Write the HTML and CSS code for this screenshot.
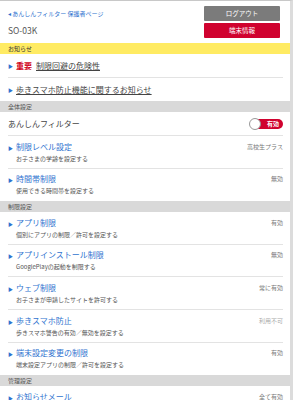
FILE: index.html
```html
<!DOCTYPE html>
<html lang="ja">
<head>
<meta charset="utf-8">
<link rel="stylesheet" href="styles.css">
</head>
<body>
<div class="page">
  <header class="top">
    <div class="top-left">
      <a class="back">◂ あんしんフィルター 保護者ページ</a>
      <div class="model">SO-03K</div>
    </div>
    <div class="top-right">
      <button class="btn btn-gray">ログアウト</button>
      <button class="btn btn-red">端末情報</button>
    </div>
  </header>

  <div class="notice-head">お知らせ</div>
  <div class="notice">
    <span class="tri">▶</span><span class="imp">重要</span><a class="ul">制限回避の危険性</a>
  </div>
  <div class="notice last">
    <span class="tri">▶</span><a class="ul">歩きスマホ防止機能に関するお知らせ</a>
  </div>

  <div class="sec">全体設定</div>
  <div class="filter">
    <span class="filter-name">あんしんフィルター</span>
    <span class="toggle"><span class="knob"></span><span class="toggle-text">有効</span></span>
  </div>
  <div class="item">
    <div class="item-main"><div class="title"><span class="tri">▶</span>制限レベル設定</div><div class="sub">お子さまの学齢を設定する</div></div>
    <div class="val">高校生プラス</div>
  </div>
  <div class="item last">
    <div class="item-main"><div class="title"><span class="tri">▶</span>時間帯制限</div><div class="sub">使用できる時間帯を設定する</div></div>
    <div class="val">無効</div>
  </div>

  <div class="sec">制限設定</div>
  <div class="item">
    <div class="item-main"><div class="title"><span class="tri">▶</span>アプリ制限</div><div class="sub">個別にアプリの制限／許可を設定する</div></div>
    <div class="val">有効</div>
  </div>
  <div class="item">
    <div class="item-main"><div class="title"><span class="tri">▶</span>アプリインストール制限</div><div class="sub">GooglePlayの起動を制限する</div></div>
    <div class="val">無効</div>
  </div>
  <div class="item">
    <div class="item-main"><div class="title"><span class="tri">▶</span>ウェブ制限</div><div class="sub">お子さまが申請したサイトを許可する</div></div>
    <div class="val">常に有効</div>
  </div>
  <div class="item">
    <div class="item-main"><div class="title"><span class="tri">▶</span>歩きスマホ防止</div><div class="sub">歩きスマホ警告の有効／無効を設定する</div></div>
    <div class="val light">利用不可</div>
  </div>
  <div class="item last">
    <div class="item-main"><div class="title"><span class="tri">▶</span>端末設定変更の制限</div><div class="sub">端末設定アプリの制限／許可を設定する</div></div>
    <div class="val">有効</div>
  </div>

  <div class="sec">管理設定</div>
  <div class="item last">
    <div class="item-main"><div class="title"><span class="tri">▶</span>お知らせメール</div><div class="sub">通知メールの受信を設定する</div></div>
    <div class="val">全て有効</div>
  </div>
</div>
</body>
</html>
```
FILE: styles.css
```css
html, body {
  margin: 0;
  padding: 0;
  background: #fff;
}
body {
  font-family: "Noto Sans CJK JP", "Noto Sans", sans-serif;
  color: #444;
  width: 293px;
  height: 400px;
  overflow: hidden;
}
.page {
  width: 290px;
  border-top: 1px solid #c8c8c8;
  border-right: 3px solid #dcdcdc;
  min-height: 399px;
}
.top {
  display: flex;
  justify-content: space-between;
  padding: 5px 10px 0 8px;
  height: 37px;
}
.top-left {
  display: flex;
  flex-direction: column;
}
.back {
  font-size: 6px;
  line-height: 10px;
  margin-top: 3px;
  color: #2f73cf;
}
.model {
  font-size: 8.5px;
  line-height: 12px;
  margin-top: 5px;
  color: #555;
}
.top-right {
  display: flex;
  flex-direction: column;
  gap: 2px;
}
.btn {
  width: 76px;
  height: 15px;
  border: 0;
  border-radius: 1px;
  padding: 0;
  color: #fff;
  font-family: inherit;
  font-size: 6.5px;
  line-height: 15px;
}
.btn-gray { background: #7b7b7b; }
.btn-red { background: #d0022f; }
.notice-head {
  background: #ffeb63;
  font-size: 6px;
  line-height: 11px;
  height: 11px;
  padding-left: 8px;
  color: #333;
}
.notice {
  margin: 0 7px 0 8px;
  height: 23px;
  font-size: 8px;
  border-bottom: 1px solid #e3e3e3;
  display: flex;
  align-items: center;
  color: #444;
}
.notice.last { border-bottom: 0; }
.tri {
  color: #2f73cf;
  font-size: 5px;
  width: 8px;
  display: inline-block;
}
.imp {
  color: #d0021b;
  font-weight: bold;
  margin-right: 4px;
}
.ul {
  text-decoration: underline;
  color: #444;
}
.sec {
  background: #d9d9d9;
  font-size: 6px;
  line-height: 11px;
  height: 11px;
  padding-left: 8px;
  color: #555;
}
.filter {
  margin: 0 7px 0 8px;
  height: 23px;
  border-bottom: 1px solid #e3e3e3;
  display: flex;
  align-items: center;
  justify-content: space-between;
}
.filter-name {
  font-size: 8px;
  color: #444;
}
.toggle {
  position: relative;
  width: 33px;
  height: 10px;
  background: #d0022f;
  border-radius: 6px;
  display: flex;
  align-items: center;
  justify-content: flex-end;
  padding-right: 4px;
  box-sizing: border-box;
}
.knob {
  position: absolute;
  left: -1px;
  top: -1px;
  width: 12px;
  height: 12px;
  border-radius: 50%;
  background: #fff;
  border: 1px solid #999;
  box-sizing: border-box;
}
.toggle-text {
  color: #fff;
  font-size: 6px;
  font-weight: bold;
  line-height: 10px;
}
.item {
  margin: 0 7px 0 8px;
  border-bottom: 1px solid #e3e3e3;
  display: flex;
  justify-content: space-between;
  padding-top: 5.6px;
  height: 26px;
}
.item.last { border-bottom: 0; height: 27px; }
.title {
  font-size: 8px;
  line-height: 10px;
  color: #2f73cf;
}
.sub {
  font-size: 6px;
  line-height: 9px;
  color: #555;
  padding-left: 8px;
  margin-top: 1px;
}
.val {
  font-size: 6px;
  line-height: 10px;
  color: #777;
}
.val.light { color: #aaa; }
```
